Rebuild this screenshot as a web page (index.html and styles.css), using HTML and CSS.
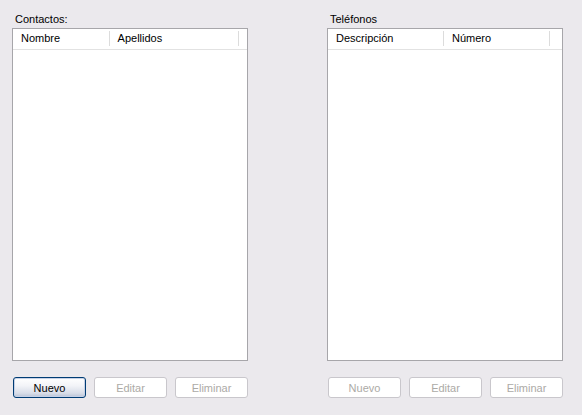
FILE: index.html
```html
<!DOCTYPE html>
<html lang="es">
<head>
<meta charset="utf-8">
<link rel="stylesheet" href="styles.css">
</head>
<body>
<div class="window">
  <section class="panel">
    <div class="label">Contactos:</div>
    <div class="list">
      <div class="header">
        <div class="col col-a1">Nombre</div>
        <div class="col col-a2">Apellidos</div>
        <div class="col col-rest"></div>
      </div>
    </div>
    <div class="buttons">
      <button class="btn default">Nuevo</button>
      <button class="btn" disabled>Editar</button>
      <button class="btn" disabled>Eliminar</button>
    </div>
  </section>
  <section class="panel">
    <div class="label">Teléfonos</div>
    <div class="list">
      <div class="header">
        <div class="col col-b1">Descripción</div>
        <div class="col col-b2">Número</div>
        <div class="col col-rest"></div>
      </div>
    </div>
    <div class="buttons">
      <button class="btn" disabled>Nuevo</button>
      <button class="btn" disabled>Editar</button>
      <button class="btn" disabled>Eliminar</button>
    </div>
  </section>
</div>
</body>
</html>
```

FILE: styles.css
```css
html, body {
  margin: 0;
  padding: 0;
  background: #ebe9ed;
  width: 582px;
  height: 415px;
  overflow: hidden;
}
.window {
  display: grid;
  grid-template-columns: 236px 236px;
  column-gap: 79px;
  padding: 12px 0 0 12px;
  font-family: "Liberation Sans", Arial, sans-serif;
  font-size: 11px;
  color: #000;
}
.panel {
  display: flex;
  flex-direction: column;
}
.label {
  height: 16px;
  line-height: 14px;
  padding-left: 3px;
}
.list {
  height: 331px;
  border: 1px solid #a7a6aa;
  background: #fff;
}
.header {
  display: flex;
  height: 20px;
  border-bottom: 1px solid #e2e2e2;
}
.col {
  position: relative;
  line-height: 20px;
  padding-left: 8px;
  box-sizing: border-box;
  border-right: 1px solid #dcdcdc;
  margin: 2px 0 3px 0;
  line-height: 15px;
}
.col-a1 { width: 97px; }
.col-a2 { width: 130px; }
.col-b1 { width: 116px; }
.col-b2 { width: 106px; }
.col-rest { flex: 1; border-right: none; }
.buttons {
  display: flex;
  gap: 8px;
  margin-top: 16px;
  padding-left: 1px;
}
.btn {
  width: 73px;
  height: 21px;
  padding: 0;
  font-family: "Liberation Sans", Arial, sans-serif;
  font-size: 11px;
  border-radius: 3px;
  border: 1px solid #c9c7cc;
  background: #fff;
  color: #acaaa6;
}
.btn.default {
  border: 1px solid #003c74;
  color: #000;
  background: linear-gradient(#ffffff 0%, #f3f4f8 40%, #d8dde8 80%, #b9c3d6 100%);
  box-shadow: inset 0 0 0 1px #c6d1e6;
}
```
